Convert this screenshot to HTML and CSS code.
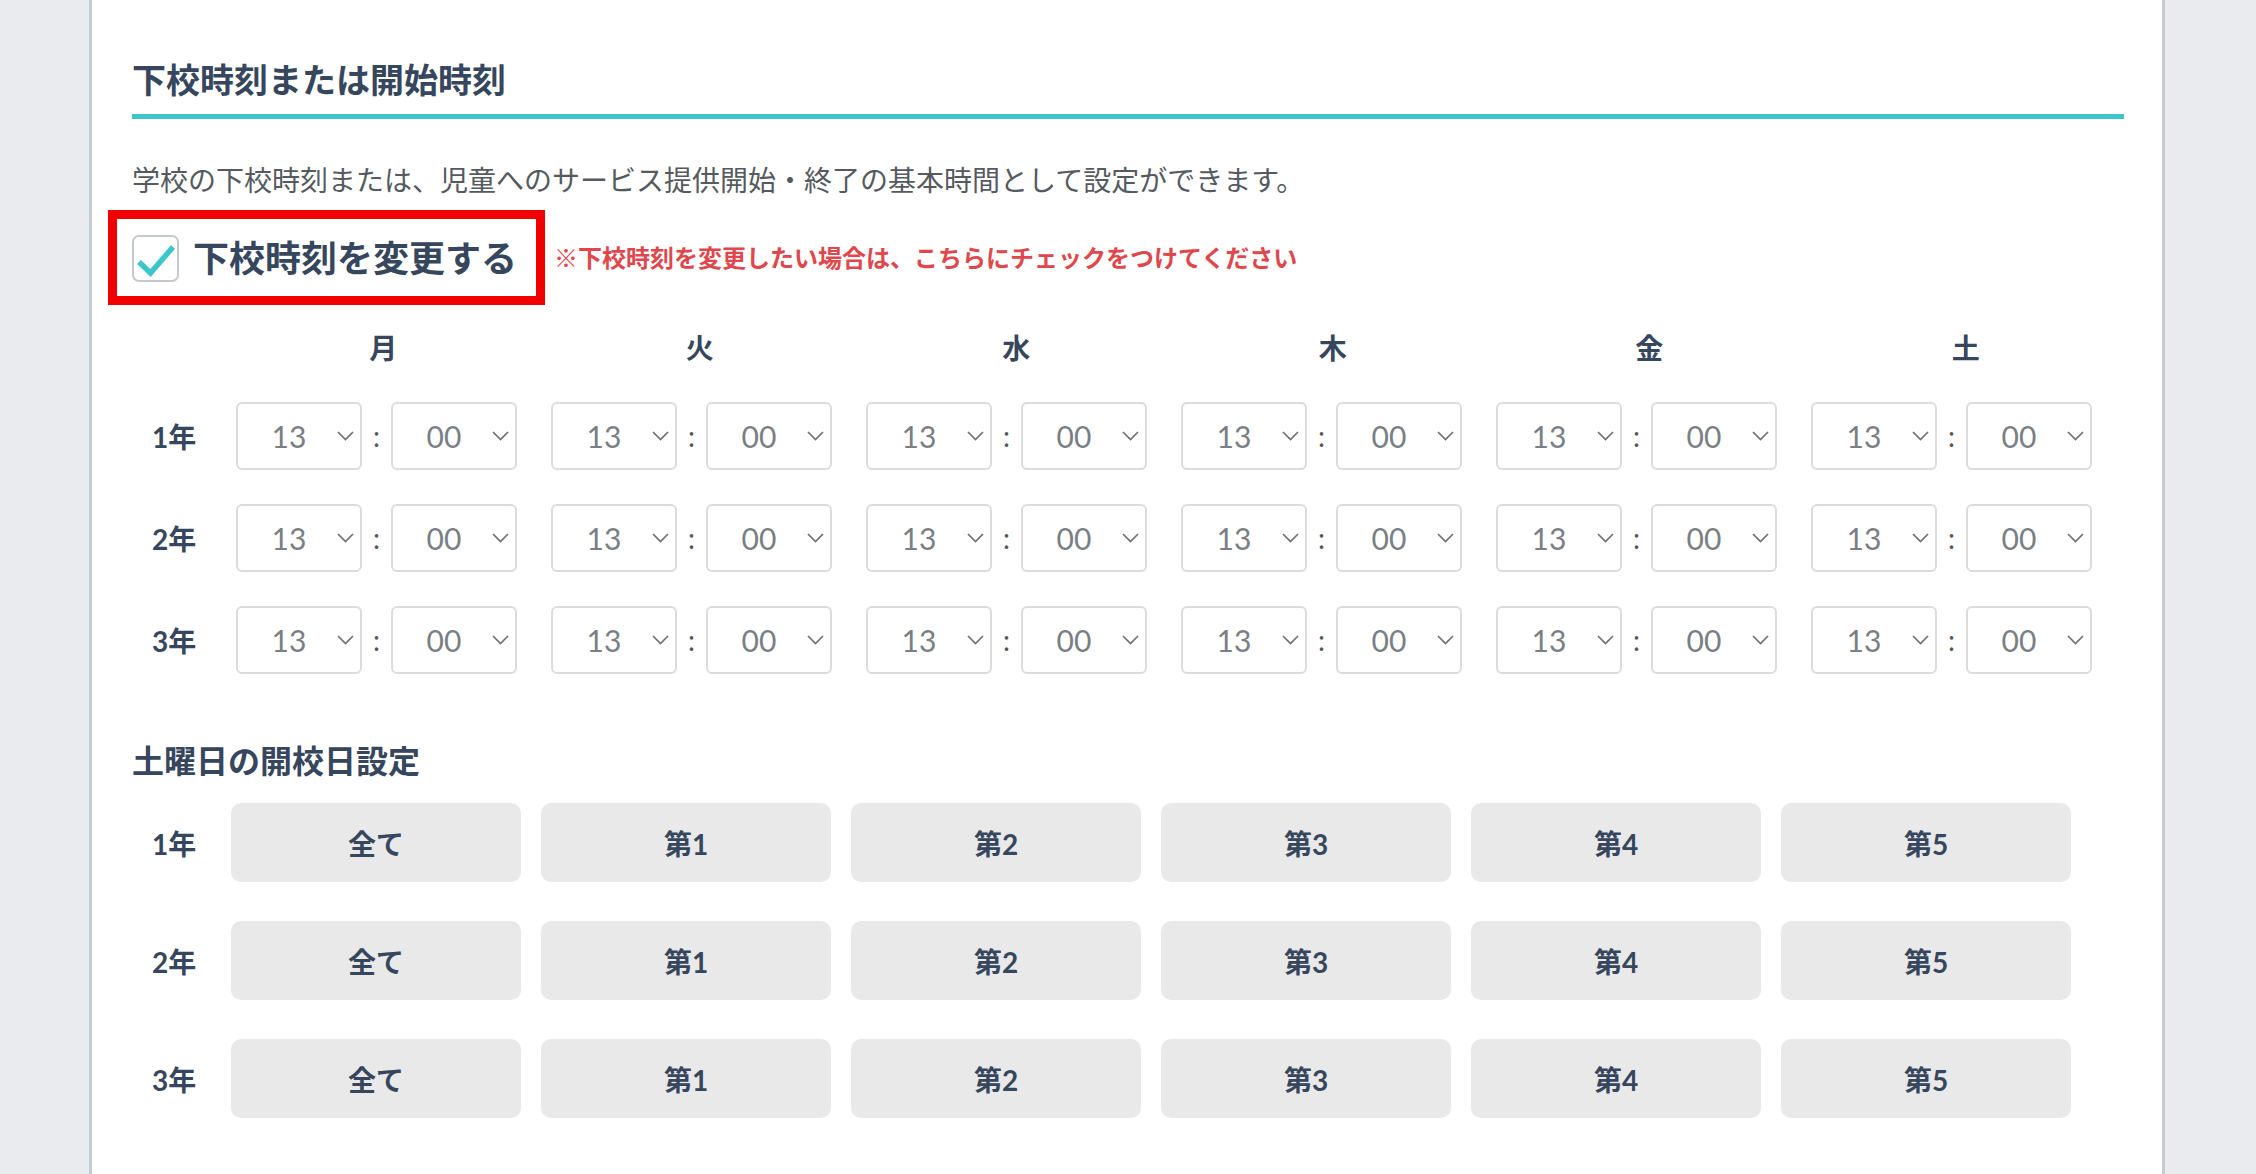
FILE: index.html
```html
<!DOCTYPE html>
<html lang="ja">
<head>
    <meta charset="UTF-8">
    <meta name="viewport" content="width=device-width, initial-scale=1.0">
    <title>下校時刻または開始時刻</title>
    <link rel="stylesheet" href="styles.css">
</head>
<body>
    <div class="container">
        <h2 class="section-title">下校時刻または開始時刻</h2>
        <p class="description">学校の下校時刻または、児童へのサービス提供開始・終了の基本時間として設定ができます。</p>

        <div class="change-row">
            <label class="change-box">
                <span class="checkbox">
                    <svg width="43" height="43" viewBox="0 0 43 43">
                        <polyline points="5,25 16.5,36 39,10" fill="none" stroke="#3cc6c9" stroke-width="5.5"/>
                    </svg>
                </span>
                <span class="change-label">下校時刻を変更する</span>
            </label>
            <span class="change-note">※下校時刻を変更したい場合は、こちらにチェックをつけてください</span>
        </div>

        <div class="day-row">
            <div class="day-head">月</div>
            <div class="day-head">火</div>
            <div class="day-head">水</div>
            <div class="day-head">木</div>
            <div class="day-head">金</div>
            <div class="day-head">土</div>
        </div>
        <div class="time-grid" id="time-grid"></div>

        <h3 class="sub-title">土曜日の開校日設定</h3>
        <div class="saturday-grid" id="saturday-grid"></div>
    </div>

    <script>
        const grades = ['1年', '2年', '3年'];
        const weeks = ['全て', '第1', '第2', '第3', '第4', '第5'];
        const chevron = '<svg class="chevron" width="17" height="10" viewBox="0 0 17 10"><polyline points="1,1 8.5,8.5 16,1" fill="none" stroke="#707070" stroke-width="1.7"/></svg>';

        function timeSelect(value) {
            return `<div class="time-select"><span class="time-value">${value}</span>${chevron}</div>`;
        }

        let timeHtml = '';
        grades.forEach(grade => {
            timeHtml += `<div class="grade-label">${grade}</div>`;
            for (let d = 0; d < 6; d++) {
                timeHtml += `<div class="time-cell">${timeSelect('13')}<span class="colon">:</span>${timeSelect('00')}</div>`;
            }
        });
        document.getElementById('time-grid').innerHTML = timeHtml;

        let satHtml = '';
        grades.forEach(grade => {
            satHtml += `<div class="grade-label">${grade}</div>`;
            weeks.forEach(week => {
                satHtml += `<button class="week-button">${week}</button>`;
            });
        });
        document.getElementById('saturday-grid').innerHTML = satHtml;
    </script>
</body>
</html>
```

FILE: styles.css
```css
body {
    margin: 0;
    background-color: #e9ebef;
    font-family: Lato, "Noto Sans CJK JP", sans-serif;
    color: #36465c;
}

.container {
    margin-left: 89px;
    width: 1992px;
    min-height: 1174px;
    background: white;
    border-left: 3px solid #c3cbd3;
    border-right: 3px solid #c3cbd3;
    padding: 0 38px 0 40px;
}

.section-title {
    margin: 0;
    padding: 55px 0 9px;
    font-size: 34px;
    line-height: 50px;
    font-weight: bold;
    border-bottom: 5px solid #3cc6c9;
}

.description {
    margin: 41px 0 0;
    font-size: 28px;
    line-height: 40px;
    color: #555a60;
}

.change-row {
    display: flex;
    align-items: center;
    gap: 9px;
    margin: 10px 0 0 -24px;
}

.change-box {
    display: flex;
    align-items: center;
    gap: 14px;
    border: 9px solid #f00000;
    padding: 16px 19px 14px 15px;
}

.checkbox {
    display: flex;
    align-items: center;
    justify-content: center;
    width: 43px;
    height: 43px;
    border: 2px solid #c6c9cc;
    border-radius: 7px;
}

.change-label {
    font-size: 36px;
    line-height: 47px;
    font-weight: bold;
}

.change-note {
    font-size: 24px;
    line-height: 34px;
    font-weight: bold;
    color: #e0474c;
}

.day-row {
    display: flex;
    margin-top: 23px;
    padding-left: 93px;
}

.day-head {
    width: 316.5px;
    text-align: center;
    font-size: 28px;
    line-height: 41px;
    font-weight: bold;
}

.time-grid {
    display: grid;
    grid-template-columns: 93px repeat(6, 315px);
    grid-auto-rows: 68px;
    row-gap: 34px;
    margin-top: 33px;
}

.grade-label {
    display: flex;
    align-items: center;
    padding-left: 20px;
    font-size: 28px;
    font-weight: bold;
}

.time-cell {
    display: flex;
    align-items: center;
    margin-left: 11px;
}

.time-select {
    display: flex;
    align-items: center;
    width: 126px;
    height: 68px;
    box-sizing: border-box;
    border: 2px solid #dcdcdc;
    border-radius: 6px;
    background: white;
}

.time-value {
    flex: 1;
    padding-left: 3px;
    text-align: center;
    font-size: 30px;
    font-weight: 400;
    color: #7a7f85;
}

.chevron {
    margin-right: 6px;
}

.colon {
    width: 29px;
    text-align: center;
    font-size: 28px;
    color: #555;
}

.sub-title {
    margin: 64px 0 0;
    font-size: 32px;
    line-height: 46px;
    font-weight: bold;
}

.saturday-grid {
    display: grid;
    grid-template-columns: 79px repeat(6, 290px);
    grid-auto-rows: 79px;
    column-gap: 20px;
    row-gap: 39px;
    margin-top: 19px;
}

.week-button {
    border: none;
    border-radius: 10px;
    background-color: #e9e9ea;
    font-family: Lato, "Noto Sans CJK JP", sans-serif;
    font-size: 28px;
    font-weight: bold;
    color: #36465c;
    cursor: pointer;
}
```
